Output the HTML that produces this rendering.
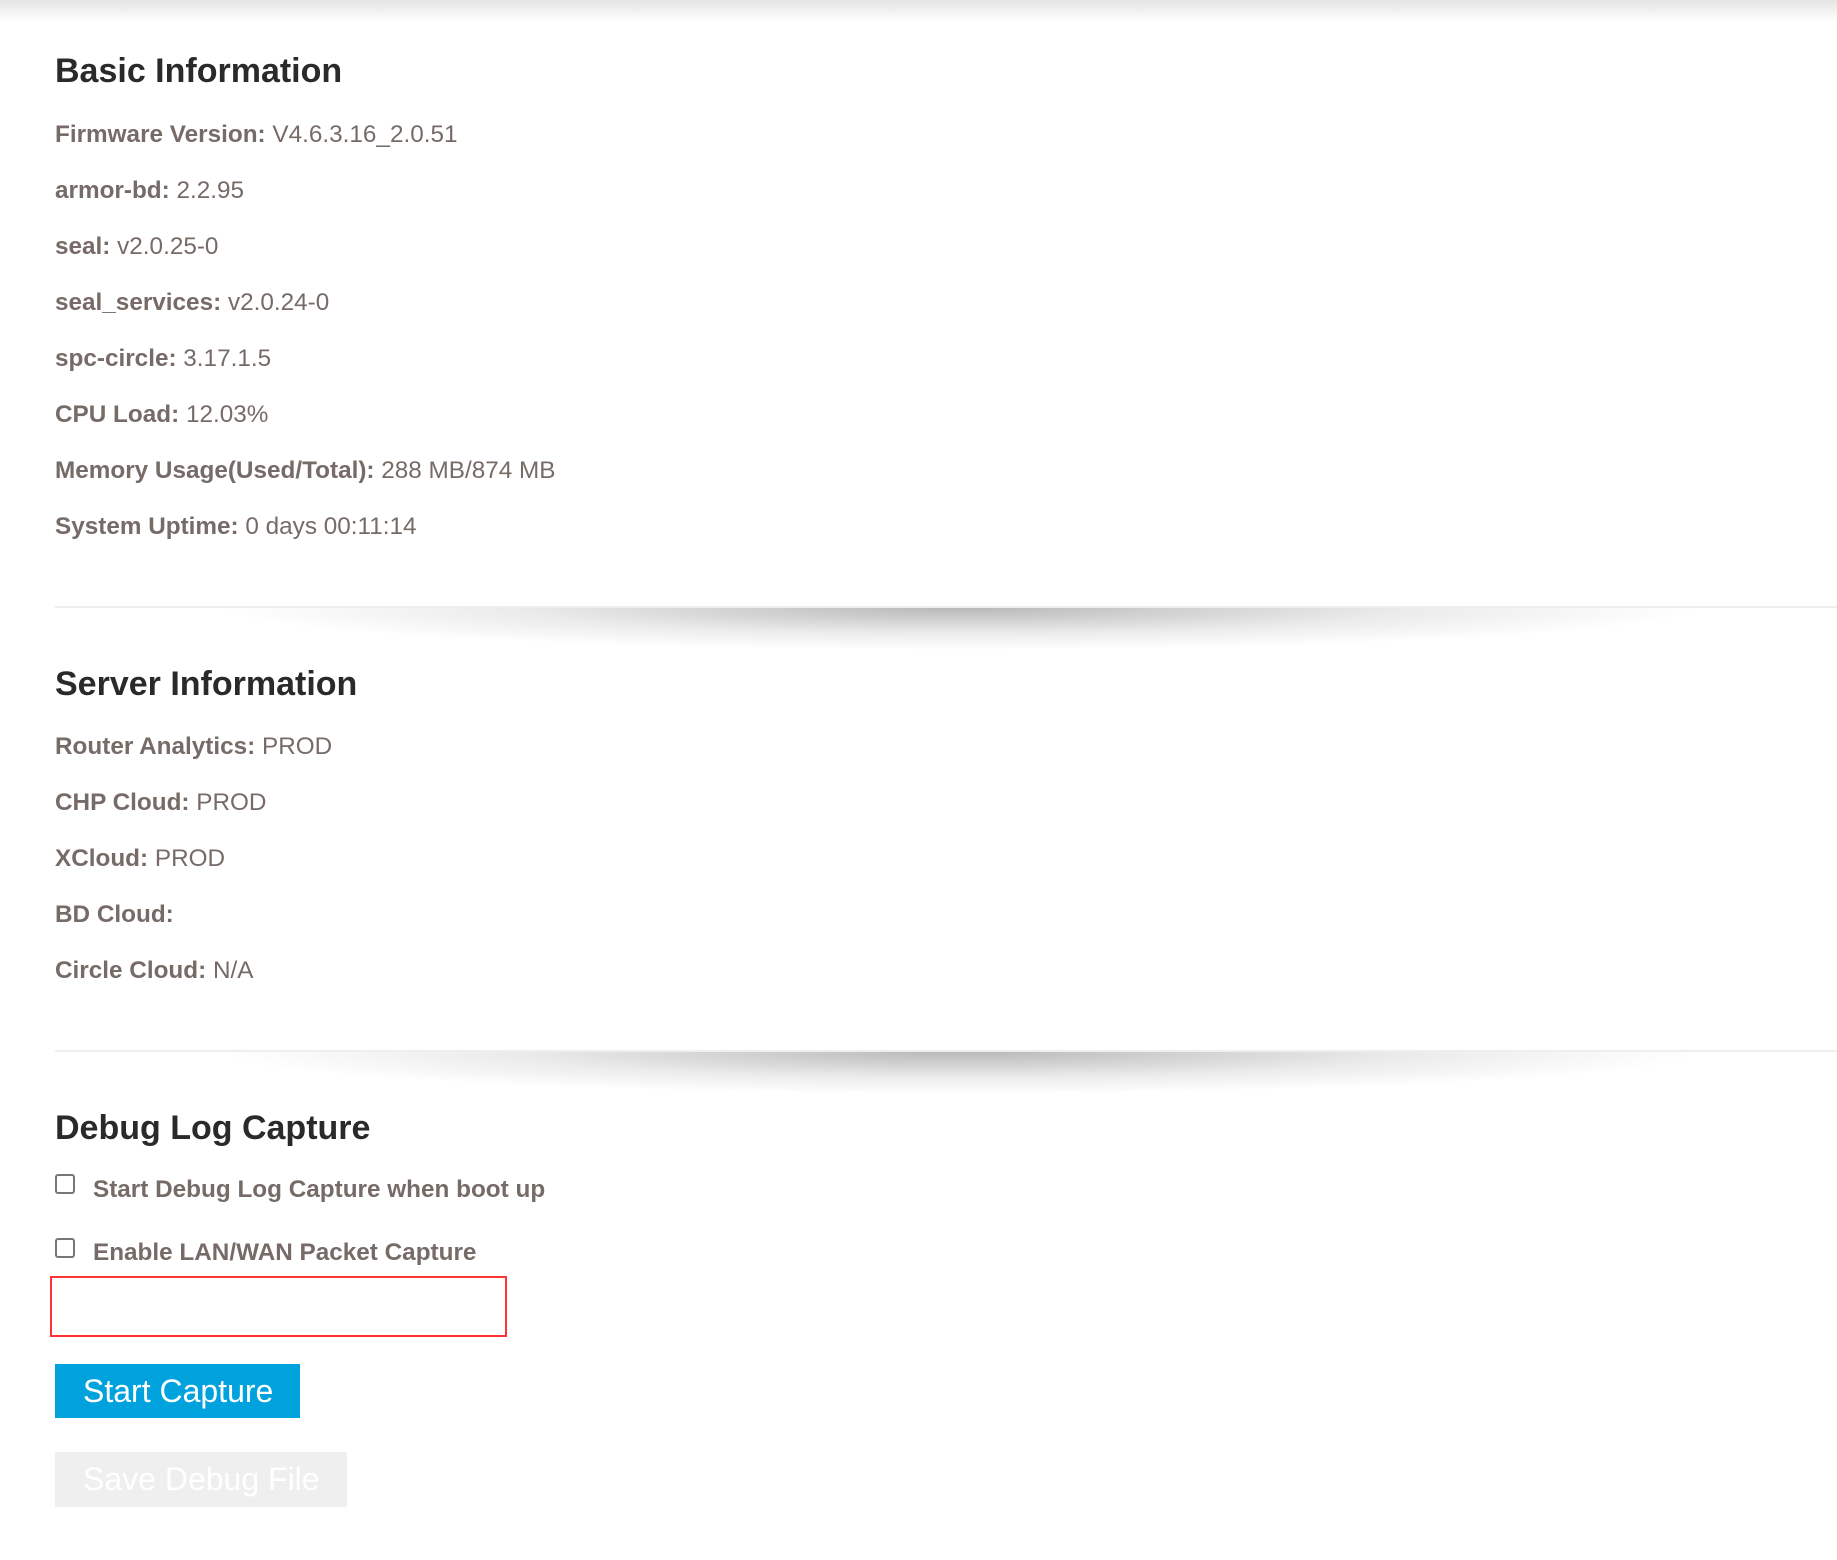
<!DOCTYPE html>
<html><head><meta charset="utf-8">
<style>
*{margin:0;padding:0;box-sizing:border-box}
html,body{width:1837px;height:1560px;background:#fff;overflow:hidden}
body{position:relative;font-family:"Liberation Sans",Arial,sans-serif}
.topsh{position:absolute;left:0;top:0;width:1837px;height:22px;background:linear-gradient(#e4e4e4,rgba(255,255,255,0))}
h2{position:absolute;left:55px;font-size:34px;font-weight:bold;color:#2a2a2a;line-height:40px}
.row{position:absolute;left:55px;font-size:24.3px;color:#766b66;line-height:26px;white-space:nowrap}
.row b{font-weight:bold}
.div{position:absolute;left:55px;width:1782px;height:2px;background:#eee}
.sh{position:absolute;left:220px;width:1480px;height:42px;background:radial-gradient(ellipse 50% 100% at 50% 0,rgba(0,0,0,.28),rgba(0,0,0,.08) 60%,rgba(0,0,0,0) 100%)}
.cb{position:absolute;left:55px;width:20px;height:20px;border:2px solid #777;border-radius:3px;background:#fff}
.lbl{position:absolute;left:93px;font-size:24.3px;font-weight:bold;color:#766b66;line-height:26px;white-space:nowrap}
.red{position:absolute;left:50px;top:1276px;width:457px;height:61px;border:2px solid #f33}
.btn{position:absolute;left:55px;font-size:32px;color:#fff;line-height:54px;padding-left:28px;white-space:nowrap}
</style></head><body>
<div class="topsh"></div>
<h2 style="top:51px">Basic Information</h2>
<div class="row" style="top:122px"><b>Firmware Version:</b> V4.6.3.16_2.0.51</div>
<div class="row" style="top:178px"><b>armor-bd:</b> 2.2.95</div>
<div class="row" style="top:234px"><b>seal:</b> v2.0.25-0</div>
<div class="row" style="top:290px"><b>seal_services:</b> v2.0.24-0</div>
<div class="row" style="top:346px"><b>spc-circle:</b> 3.17.1.5</div>
<div class="row" style="top:402px"><b>CPU Load:</b> 12.03%</div>
<div class="row" style="top:458px"><b>Memory Usage(Used/Total):</b> 288 MB/874 MB</div>
<div class="row" style="top:514px"><b>System Uptime:</b> 0 days 00:11:14</div>
<div class="div" style="top:606px"></div>
<div class="sh" style="top:608px"></div>
<h2 style="top:664px">Server Information</h2>
<div class="row" style="top:734px"><b>Router Analytics:</b> PROD</div>
<div class="row" style="top:790px"><b>CHP Cloud:</b> PROD</div>
<div class="row" style="top:846px"><b>XCloud:</b> PROD</div>
<div class="row" style="top:902px"><b>BD Cloud:</b></div>
<div class="row" style="top:958px"><b>Circle Cloud:</b> N/A</div>
<div class="div" style="top:1050px"></div>
<div class="sh" style="top:1052px"></div>
<h2 style="top:1108px">Debug Log Capture</h2>
<div class="cb" style="top:1174px"></div>
<div class="lbl" style="top:1177px">Start Debug Log Capture when boot up</div>
<div class="cb" style="top:1238px"></div>
<div class="lbl" style="top:1240px">Enable LAN/WAN Packet Capture</div>
<div class="red"></div>
<div class="btn" style="top:1364px;width:245px;background:#00a2de">Start Capture</div>
<div class="btn" style="top:1452px;width:292px;height:55px;background:#efefef">Save Debug File</div>
</body></html>
